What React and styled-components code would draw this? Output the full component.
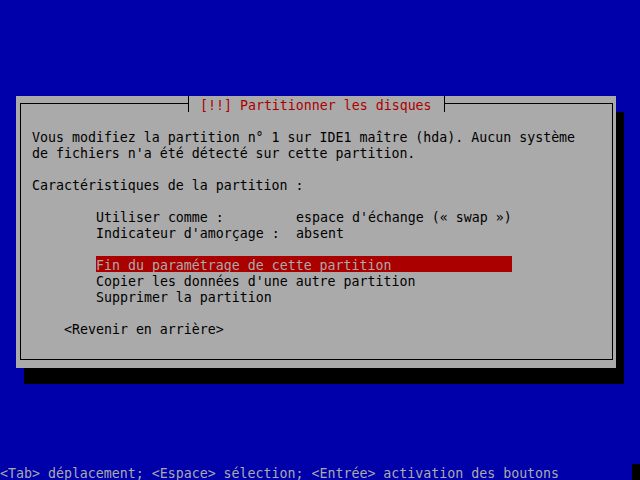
import React from 'react';
import styled, { createGlobalStyle } from 'styled-components';

const GlobalStyle = createGlobalStyle`
  html, body {
    margin: 0;
    padding: 0;
    background: #0000aa;
  }
  * {
    box-sizing: border-box;
  }
`

const Screen = styled.div`
   width: 640px;
   height: 480px;
   display: flex;
   flex-direction: column;
   background: #0000aa;
   color: #000000;
   font-family: 'DejaVu Sans Mono', 'Liberation Mono', monospace;
   font-size: 13.288px;
   line-height: 16px;
   overflow: hidden;
`

const Stage = styled.div`
   flex: 1;
   padding: 96px 0 0 16px;
`

const Dialog = styled.div`
   width: 600px;
   background: #aaaaaa;
   padding: 7px 3px 8px 4px;
   box-shadow: 8px 16px 0 #000000;
`

const Frame = styled.div`
   position: relative;
   border: 1px solid #000000;
   padding: 8px 0 7px 11px;
`

const TitleBar = styled.div`
   position: absolute;
   top: -8px;
   left: 163px;
   display: flex;
   height: 16px;
   background: #aaaaaa;
`

const Tee = styled.span`
   position: relative;
   width: 8px;
   height: 16px;
   &::before {
     content: '';
     position: absolute;
     top: 7px;
     left: ${props => props.$right ? '4px' : '0'};
     width: ${props => props.$right ? '4px' : '5px'};
     height: 1px;
     background: #000000;
   }
   &::after {
     content: '';
     position: absolute;
     top: 0;
     left: 4px;
     width: 1px;
     height: 16px;
     background: #000000;
   }
`

const TitleText = styled.span`
   color: #aa0000;
   white-space: pre;
   padding-top: 2px;
`

const Line = styled.div`
   height: 16px;
   padding-top: 2px;
   white-space: pre;
`

const Blank = styled.div`
   height: ${props => props.$rows * 16}px;
`

const Fields = styled.div`
   margin-left: 64px;
   display: grid;
   grid-template-columns: 200px auto;
   grid-auto-rows: 16px;
   white-space: pre;
`

const FieldCell = styled.span`
   padding-top: 2px;
`

const Menu = styled.div`
   margin-left: 64px;
   display: flex;
   flex-direction: column;
`

const MenuItem = styled.div`
   width: 416px;
   height: 16px;
   padding-top: 2px;
   white-space: pre;
   background: ${props => props.$active ? '#aa0000' : 'transparent'};
   color: ${props => props.$active ? '#aaaaaa' : '#000000'};
`

const BackButton = styled.div`
   margin-left: 32px;
   height: 16px;
   padding-top: 2px;
   white-space: pre;
`

const StatusBar = styled.div`
   display: flex;
   height: 16px;
   color: #aaaaaa;
   white-space: pre;
`

const StatusText = styled.span`
   flex: 1;
   padding-top: 2px;
`

const Cursor = styled.span`
   width: 8px;
   height: 16px;
   background: #000000;
`

const fields = [
    ['Utiliser comme :', "espace d'échange (« swap »)"],
    ["Indicateur d'amorçage :", 'absent'],
]

const actions = [
    'Fin du paramétrage de cette partition',
    "Copier les données d'une autre partition",
    'Supprimer la partition',
]

const App = () => {

    return (
        <>
            <GlobalStyle />
            <Screen>
                <Stage>
                    <Dialog>
                        <Frame>
                            <TitleBar>
                                <Tee />
                                <TitleText> [!!] Partitionner les disques </TitleText>
                                <Tee $right />
                            </TitleBar>

                            <Blank $rows={1} />
                            <Line>Vous modifiez la partition n° 1 sur IDE1 maître (hda). Aucun système</Line>
                            <Line>de fichiers n'a été détecté sur cette partition.</Line>
                            <Blank $rows={1} />
                            <Line>Caractéristiques de la partition :</Line>
                            <Blank $rows={1} />

                            <Fields>
                                {fields.map(([label, value]) => (
                                    <React.Fragment key={label}>
                                        <FieldCell>{label}</FieldCell>
                                        <FieldCell>{value}</FieldCell>
                                    </React.Fragment>
                                ))}
                            </Fields>
                            <Blank $rows={1} />

                            <Menu>
                                {actions.map((text, i) => (
                                    <MenuItem key={text} $active={i === 0}>{text}</MenuItem>
                                ))}
                            </Menu>
                            <Blank $rows={1} />

                            <BackButton>&lt;Revenir en arrière&gt;</BackButton>
                            <Blank $rows={1} />
                        </Frame>
                    </Dialog>
                </Stage>

                <StatusBar>
                    <StatusText>&lt;Tab&gt; déplacement; &lt;Espace&gt; sélection; &lt;Entrée&gt; activation des boutons</StatusText>
                    <Cursor />
                </StatusBar>
            </Screen>
        </>
    )

}

export default App;
